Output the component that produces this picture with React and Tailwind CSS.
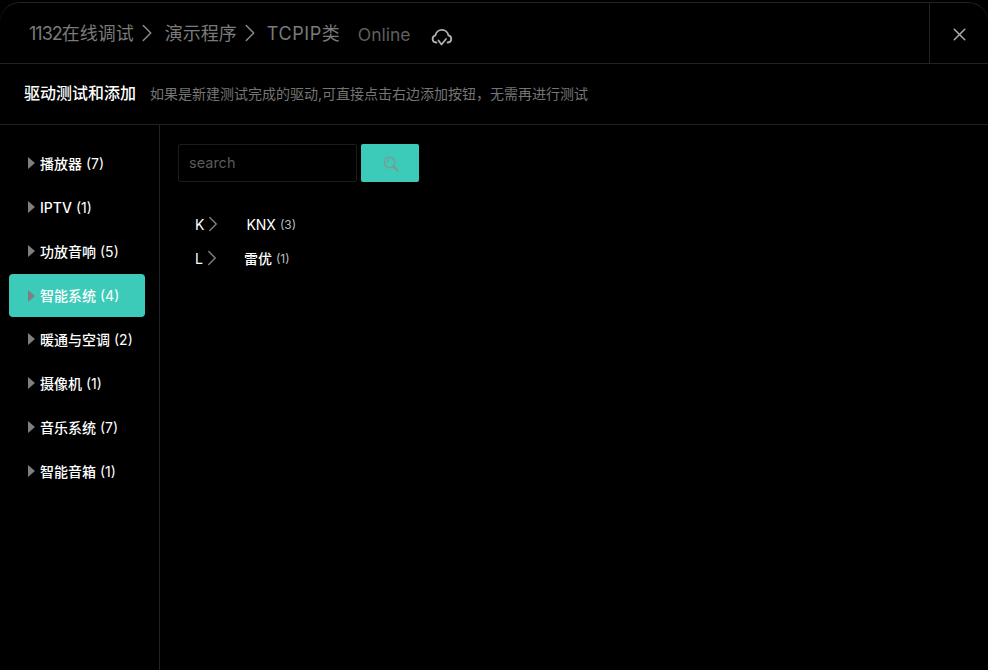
import { ChevronRight, X } from 'lucide-react';

const cats = [
  ['播放器', 7],
  ['IPTV', 1],
  ['功放音响', 5],
  ['智能系统', 4, true],
  ['暖通与空调', 2],
  ['摄像机', 1],
  ['音乐系统', 7],
  ['智能音箱', 1],
];

const font = 'font-["Inter","Noto_Sans_CJK_SC",sans-serif]';

function CloudCheck() {
  return (
    <svg width="22" height="20" viewBox="0 0 22 20" fill="none" stroke="#b0b0b0" strokeWidth="1.8" strokeLinecap="round" strokeLinejoin="round">
      <path d="M5.5 14.5H5A3.6 3.6 0 0 1 4.4 7.4 6.6 6.6 0 0 1 17.4 7.4 3.6 3.6 0 0 1 17 14.5H16.5" />
      <path d="M7.5 12.5 10.5 16.5 15 11" />
    </svg>
  );
}

function SearchIcon() {
  return (
    <svg width="16" height="16" viewBox="0 0 16 16" fill="none" stroke="#7a9a95" strokeLinecap="round">
      <circle cx="6.5" cy="6.5" r="5.2" strokeWidth="1.4" />
      <path d="M3.8 6.5A2.7 2.7 0 0 1 6 3.8" strokeWidth="1" />
      <path d="M10.6 10.6 14.4 14.4" strokeWidth="2.2" />
    </svg>
  );
}

export default function App() {
  return (
    <div className={`${font} h-[670px] w-[988px] overflow-hidden bg-black pt-0.5`}>
      <div className="flex h-full flex-col rounded-t-[20px] border-t border-[#222]">
        {/* Title bar */}
        <div className="flex h-[61px] shrink-0 border-b border-[#222]">
          <div className="flex flex-1 items-center pl-[29px] text-[18px] text-[#7a7a7a]">
            <span><span className="tracking-[-1px]">1132</span>在线调试</span>
            <ChevronRight size={30} strokeWidth={1.2} className="-ml-0.5 -mr-2 text-[#8a8a8a]" />
            <span className="ml-[11px]">演示程序</span>
            <ChevronRight size={30} strokeWidth={1.2} className="-ml-0.5 -mr-2 text-[#8a8a8a]" />
            <span className="ml-[10px]"><span className="tracking-[0.6px]">TCPIP</span>类</span>
            <span className="ml-[18px] mt-1 text-[17.5px] text-[#5f5f5f]">Online</span>
            <span className="ml-[20px] mt-[10px]"><CloudCheck /></span>
          </div>
          <div className="flex w-[59px] items-center justify-center border-l border-[#222] pt-0.5">
            <X size={21} strokeWidth={1.75} className="text-[#a8a8a8]" />
          </div>
        </div>

        {/* Sub title */}
        <div className="flex h-[61px] shrink-0 items-center border-b border-[#222] pb-0.5 pl-[24px]">
          <span className="text-[16px] font-medium text-white">驱动测试和添加</span>
          <span className="ml-[14px] text-[14px] text-[#757575]">如果是新建测试完成的驱动,可直接点击右边添加按钮，无需再进行测试</span>
        </div>

        <div className="flex min-h-0 flex-1">
          {/* Categories */}
          <div className="w-[160px] shrink-0 border-r border-[#222] pl-[9px] pr-[14px] pt-4">
            {cats.map(([name, count, active]) => (
              <div key={name} className={`flex items-center rounded pl-[19px] text-[14px] text-white ${active ? 'mt-px h-[43px] bg-[#3ccbb9]' : 'h-11'}`}>
                <span className="mr-[5px] h-0 w-0 border-y-[6px] border-l-[7px] border-y-transparent border-l-[#7f7f7f]" />
                <span className="font-medium">{name}</span>
                <span className="ml-1">({count})</span>
              </div>
            ))}
          </div>

          {/* Content */}
          <div className="flex-1 pl-[18px] pt-[19px]">
            <div className="flex gap-1">
              <input
                placeholder="search"
                className="h-[38px] w-[179px] rounded-[2px] border border-[#1c1c1c] bg-black px-[10px] pb-0.5 text-[14.5px] text-white outline-none placeholder:text-[#5a5a5a]"
              />
              <button className="flex h-[38px] w-[58px] items-center justify-center rounded-[2px] bg-[#3ccbb9] pl-0.5 pt-px">
                <SearchIcon />
              </button>
            </div>
            <div className="mt-[25px] pl-[17px] text-[14px] text-white">
              <div className="flex h-[34px] items-center">
                <span>K</span>
                <ChevronRight size={26} strokeWidth={1.3} className="-my-1 -ml-1 text-[#7f7f7f]" />
                <span className="ml-[20px]">KNX</span>
                <span className="ml-1 mt-0.5 text-[12px] text-[#bdbdbd]">(3)</span>
              </div>
              <div className="flex h-[34px] items-center">
                <span>L</span>
                <ChevronRight size={26} strokeWidth={1.3} className="-my-1 -ml-1 text-[#7f7f7f]" />
                <span className="ml-[19px] font-medium">雷优</span>
                <span className="ml-1 mt-0.5 text-[12px] text-[#bdbdbd]">(1)</span>
              </div>
            </div>
          </div>
        </div>
      </div>
    </div>
  );
}
